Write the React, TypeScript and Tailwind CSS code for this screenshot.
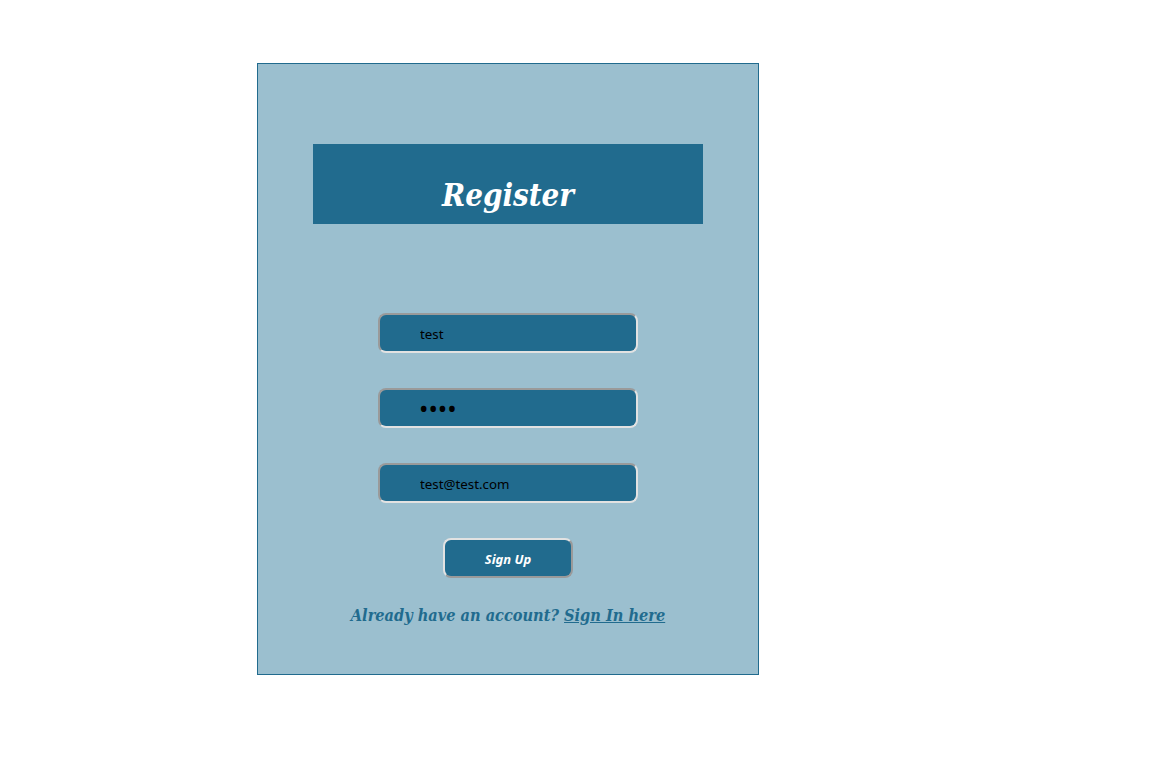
export default function App() {
  const inputCls =
    "block w-[260px] h-[40px] rounded-[8px] border-2 border-t-[#9a9a9a] border-l-[#9a9a9a] border-b-[#e2e2e2] border-r-[#e2e2e2] bg-[#216b8e] pl-[40px] pt-[2px] text-[13.33px] text-black outline-none";
  return (
    <div className="min-h-[767px] bg-white pt-[63px] pl-[257px]" style={{ fontFamily: '"Noto Sans", sans-serif' }}>
      <div className="w-[502px] h-[612px] border border-[#216b8e] bg-[#9bbfcf] flex flex-col items-center pt-[80px]">
        <div className="w-[390px] h-[80px] bg-[#216b8e] flex items-end justify-center pb-[13px]">
          <h1
            className="text-white font-bold italic text-[31px] leading-none"
            style={{ fontFamily: '"DejaVu Serif Condensed", "DejaVu Serif", serif', fontStretch: "condensed" }}
          >
            Register
          </h1>
        </div>
        <div className="flex flex-col items-center gap-[35px] mt-[89px]">
          <input className={inputCls} defaultValue="test" />
          <input className={inputCls + " !text-[25px] !pt-0 !pl-[39px]"} type="password" defaultValue="test" />
          <input className={inputCls} defaultValue="test@test.com" />
          <button className="w-[130px] h-[40px] rounded-[8px] border-2 border-t-[#e2e2e2] border-l-[#e2e2e2] border-b-[#9a9a9a] border-r-[#9a9a9a] bg-[#216b8e] pt-[3px] text-white font-bold italic text-[13px]">
            Sign Up
          </button>
        </div>
        <p
          className="mt-[26px] text-[#216b8e] font-bold italic text-[16.2px]"
          style={{ fontFamily: '"DejaVu Serif Condensed", "DejaVu Serif", serif', fontStretch: "condensed" }}
        >
          Already have an account? <a href="#" className="underline">Sign In here</a>
        </p>
      </div>
    </div>
  );
}
